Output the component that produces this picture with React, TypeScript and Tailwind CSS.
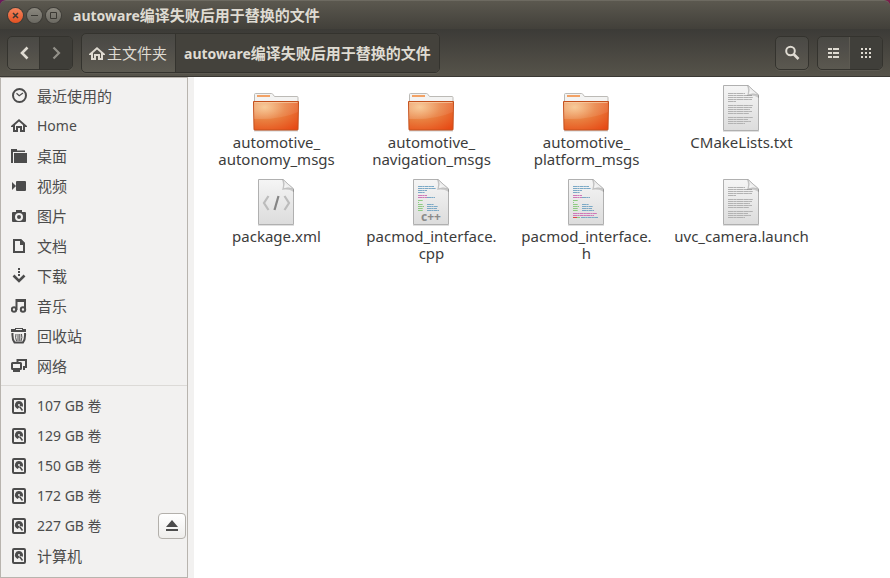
import type { ReactNode } from "react";

const FONT = "font-['Noto_Sans','Noto_Sans_CJK_SC',sans-serif]";

function Glyph({ children }: { children: ReactNode }) {
  return (
    <svg viewBox="0 0 16 16" className="size-4 shrink-0" fill="currentColor" aria-hidden="true">
      {children}
    </svg>
  );
}

const stroke = { fill: "none", stroke: "currentColor", strokeWidth: 2 } as const;

const icons = {
  recent: (
    <Glyph>
      <circle cx="8.500" cy="7.500" r="6.500" {...stroke} />
      <path d="M5.500 5.200 8.200 7.800 12 5" {...stroke} strokeWidth={1.2} />
    </Glyph>
  ),
  home: (
    <Glyph>
      <path d="M8 1 0 8v1h2v5h5v-4h2v4h5V9h2V8zM8 3.6l4 3.5V12h-1V8H5v4H4V7.1z" />
    </Glyph>
  ),
  folder: (
    <Glyph>
      <path d="M0 1h6v1.500h8V4H2v11H0zM3 5h13v9.500q0 .5-.5.5H3z" />
    </Glyph>
  ),
  video: (
    <Glyph>
      <path d="M1 4l4 4-4 4z" />
      <rect x="5" y="3" width="10" height="10" rx="1" />
    </Glyph>
  ),
  camera: (
    <Glyph>
      <path
        fillRule="evenodd"
        d="M5 2h6v2h3q1 0 1 1v8q0 1-1 1H2q-1 0-1-1V5q0-1 1-1h3zM8 5a4 4 0 1 0 0 8 4 4 0 0 0 0-8zm0 2a2 2 0 1 1 0 4 2 2 0 0 1 0-4z"
      />
    </Glyph>
  ),
  document: (
    <Glyph>
      <path d="M3 2h6.500L13 5.500V14H3z" {...stroke} />
      <path d="M9 1h1l4 4v2H9z" />
    </Glyph>
  ),
  download: (
    <Glyph>
      <path d="M7 0h2v2H7zM7 3h2v2H7zM7 6h2v2H7z" />
      <path d="M2.500 7.500 8 13l5.500-5.500" {...stroke} strokeWidth={2.6} />
    </Glyph>
  ),
  music: (
    <Glyph>
      <circle cx="3" cy="11.500" r="2.200" {...stroke} />
      <circle cx="12" cy="11.500" r="2.200" {...stroke} />
      <path d="M5.500 12V2H14v9.500" {...stroke} />
      <path d="M5 1h10v3H5z" />
    </Glyph>
  ),
  trash: (
    <Glyph>
      <path fillRule="evenodd" d="M4 0h8v1h3v3H0V1h4zM5 1h6v1H5z" />
      <path d="M1.500 5q-.5 6 2 9.500h8.500Q14.500 11 14 5" {...stroke} />
      <path d="M5 6q-1 3.500.5 7M10.500 6q1 3.500-.5 7M7 6v7M8.800 6v7" {...stroke} strokeWidth={1} />
    </Glyph>
  ),
  network: (
    <Glyph>
      <path d="M6.500 4V2H15v7h-3" {...stroke} />
      <rect x="1" y="5" width="9" height="6" rx="0.5" {...stroke} />
      <path d="M3 11h5v1h1v2H2v-2h1zM12 9h2v3h-2z" />
    </Glyph>
  ),
  disk: (
    <Glyph>
      <rect x="2" y="1" width="12" height="14" rx="1" {...stroke} />
      <path d="M8 3a4 4 0 0 0-3 6.800L6.500 11 8 9.500V8h2l1.500 1A4 4 0 0 0 8 3zm0 3a1 1 0 1 1 0 2 1 1 0 0 1 0-2z" />
      <path d="M8.500 8.500 11.500 12.500" {...stroke} strokeWidth={1.6} />
    </Glyph>
  ),
};

type Place = { label: string; icon: ReactNode; latin?: boolean; ejectable?: boolean };

const places: Place[] = [
  { label: "最近使用的", icon: icons.recent },
  { label: "Home", icon: icons.home, latin: true },
  { label: "桌面", icon: icons.folder },
  { label: "视频", icon: icons.video },
  { label: "图片", icon: icons.camera },
  { label: "文档", icon: icons.document },
  { label: "下载", icon: icons.download },
  { label: "音乐", icon: icons.music },
  { label: "回收站", icon: icons.trash },
  { label: "网络", icon: icons.network },
];

const devices: Place[] = [
  { label: "107 GB 卷", icon: icons.disk, latin: true },
  { label: "129 GB 卷", icon: icons.disk, latin: true },
  { label: "150 GB 卷", icon: icons.disk, latin: true },
  { label: "172 GB 卷", icon: icons.disk, latin: true },
  { label: "227 GB 卷", icon: icons.disk, latin: true, ejectable: true },
  { label: "计算机", icon: icons.disk },
];

function PlaceList({ items }: { items: Place[] }) {
  return (
    <ul>
      {items.map((item) => (
        <li key={item.label} className="flex h-[30px] items-center pr-px">
          <a href="#" className="flex flex-1 items-center gap-[10px] pl-[10px]">
            {item.icon}
            <span className={item.latin ? "text-[14px] leading-6" : "leading-6"}>{item.label}</span>
          </a>
          {item.ejectable && (
            <button
              type="button"
              aria-label="弹出"
              className="flex h-[26px] w-7 items-center justify-center rounded-[4px] border border-[#b3b0ab] bg-linear-to-b from-white to-[#eeedeb]"
            >
              <Glyph>
                <path d="M8 2l6 7H2zM2 11h12v2H2z" />
              </Glyph>
            </button>
          )}
        </li>
      ))}
    </ul>
  );
}

function FolderIcon() {
  return (
    <svg viewBox="1 0 48 48" className="size-12" aria-hidden="true">
      <defs>
        <radialGradient id="folder-face" cx="0.25" cy="0.2" r="1">
          <stop offset="0" stopColor="#f6c084" />
          <stop offset="0.45" stopColor="#e98040" />
          <stop offset="1" stopColor="#e74a15" />
        </radialGradient>
        <linearGradient id="folder-gloss" x1="0" y1="0" x2="1" y2="1">
          <stop offset="0" stopColor="#fff" stopOpacity="0.22" />
          <stop offset="1" stopColor="#fff" stopOpacity="0.04" />
        </linearGradient>
      </defs>
      <path d="M2 46.500h44" stroke="#000" strokeOpacity="0.18" strokeWidth="2" />
      <path d="M2.500 18v-7.500q0-1 1-1h16q1 0 1.500 1l1.500 2h22.500q1 0 1 1V18z" fill="#f3f3f2" stroke="#bcbab6" />
      <rect x="5" y="11" width="13" height="2" fill="#f3a265" />
      <path d="M1.500 17.500h45l-.5 28q0 .5-1 .5H3q-1 0-1-.5z" fill="url(#folder-face)" stroke="#c4501c" />
      <path d="M2 18h44v10q-18 8-44 7z" fill="url(#folder-gloss)" />
      <path d="M2.500 18.500h43" stroke="#fad0a8" strokeOpacity="0.7" />
    </svg>
  );
}

function Page({ children }: { children: ReactNode }) {
  return (
    <svg viewBox="1 0 48 48" className="size-12" aria-hidden="true">
      <defs>
        <linearGradient id="page-face" x1="0" y1="0" x2="0" y2="1">
          <stop offset="0" stopColor="#f5f5f5" />
          <stop offset="1" stopColor="#dcdcdc" />
        </linearGradient>
        <linearGradient id="page-fold" x1="0" y1="1" x2="0.7" y2="0.3">
          <stop offset="0" stopColor="#fff" />
          <stop offset="1" stopColor="#e3e3e3" />
        </linearGradient>
      </defs>
      <path d="M6 47.500h36" stroke="#000" strokeOpacity="0.12" />
      <path d="M6.500 1.500H31L41.500 11v35.500h-35z" fill="url(#page-face)" stroke="#b0b0b0" />
      {children}
      <path d="M30 2q2 4 0 10 6-1.500 12 2V11L31 1.500z" fill="#000" fillOpacity="0.16" />
      <path d="M31 1.500q2 4 .5 9 5-1.500 10 .5z" fill="url(#page-fold)" stroke="#b8b8b8" strokeWidth="0.7" />
    </svg>
  );
}

const textRows: [number, number][] = [
  [9, 17], [11, 24], [13, 25], [15, 24], [17, 8],
  [21, 25], [23, 24], [25, 22], [27, 24], [29, 21],
  [33, 25], [35, 20], [37, 23], [39, 17],
];

function TextIcon() {
  return (
    <Page>
      {textRows.map(([y, width]) => (
        <path key={y} d={`M11 ${y + 0.5}h${width}`} stroke="#b2b2b2" strokeDasharray="5 0.3 3 0.2 7 0.3" />
      ))}
    </Page>
  );
}

function XmlIcon() {
  return (
    <Page>
      <path d="M16.500 18 12 25l4.500 7M32.500 18 37 25l-4.500 7" fill="none" stroke="#bcbcbc" strokeWidth="2.200" />
      <path d="M26.500 18 22.500 32" fill="none" stroke="#858585" strokeWidth="2.200" />
    </Page>
  );
}

const BLUE = "#7ba9c6";
const PINK = "#cf77b8";
const GREEN = "#8dcb82";

const codeRows: [number, number, number, string][] = [
  [11, 8, 16, BLUE], [11, 10, 18, BLUE], [11, 12, 9, BLUE], [11, 14, 7, BLUE],
  [11, 17, 9, PINK], [11, 19, 9, PINK], [20, 19, 8, BLUE],
  [11, 22, 5, GREEN], [11, 24, 1, GREEN],
  [11, 26, 5, GREEN], [20, 26, 7, BLUE],
  [11, 28, 6, GREEN], [20, 28, 11, BLUE],
  [11, 30, 5, GREEN], [20, 30, 10, BLUE],
  [11, 32, 5, GREEN], [20, 32, 12, BLUE],
];

const headerRows: [number, number, number, string][] = [
  [11, 35, 24, PINK], [11, 37, 21, PINK], [11, 39, 4, "#e0454a"], [15, 39, 3, GREEN], [19, 39, 17, BLUE],
];

function CodeIcon({ plus }: { plus?: boolean }) {
  const rows = plus ? codeRows : [...codeRows, ...headerRows];
  return (
    <Page>
      {rows.map(([x, y, width, color]) => (
        <path key={`${x}-${y}`} d={`M${x} ${y + 0.5}h${width}`} stroke={color} strokeDasharray="4 0.3 2 0.3" />
      ))}
      {plus && (
        <text x="24" y="43" textAnchor="middle" fontSize="12" fontWeight="700" fill="#8a8a8a">
          c++
        </text>
      )}
    </Page>
  );
}

const files = [
  { name: "automotive_\nautonomy_msgs", icon: <FolderIcon /> },
  { name: "automotive_\nnavigation_msgs", icon: <FolderIcon /> },
  { name: "automotive_\nplatform_msgs", icon: <FolderIcon /> },
  { name: "CMakeLists.txt", icon: <TextIcon /> },
  { name: "package.xml", icon: <XmlIcon /> },
  { name: "pacmod_interface.\ncpp", icon: <CodeIcon plus /> },
  { name: "pacmod_interface.\nh", icon: <CodeIcon /> },
  { name: "uvc_camera.launch", icon: <TextIcon /> },
];

function WindowButton({ label, close, children }: { label: string; close?: boolean; children: ReactNode }) {
  return (
    <button
      type="button"
      aria-label={label}
      className={`flex size-[15px] items-center justify-center rounded-full text-[#3a3833] shadow-[0_0_0_1px_#3f3d38] ${
        close ? "bg-linear-to-b from-[#f4845c] to-[#e3501f]" : "bg-linear-to-b from-[#8b887f] to-[#6b6962]"
      }`}
    >
      <svg viewBox="0 0 15 15" className="size-[15px]" fill="none" stroke="currentColor" aria-hidden="true">
        {children}
      </svg>
    </button>
  );
}

function FolderName() {
  return (
    <>
      <span className="text-[14px]">autoware</span>编译失败后用于替换的文件
    </>
  );
}

const group = "flex overflow-hidden rounded-[5px] border border-[#34332e] bg-white/5 shadow-[0_1px_0_#5d5a52]";
const toolButton = "flex w-8 items-center justify-center";

export default function App() {
  return (
    <div className={`flex min-h-screen flex-col bg-white text-[15px] text-[#3c3c3c] ${FONT}`}>
      <header className="bg-linear-to-r from-[#6b1a5a] to-[#7a1f4b] text-[#dfdbd2]">
        <div className="flex h-[29px] items-center rounded-t-[6px] border-t border-[#6d6a61] bg-linear-to-b from-[#5b584f] to-[#42403a] pl-2">
          <div className="flex gap-1">
            <WindowButton label="关闭" close>
              <path d="M5 5l5 5m0-5l-5 5" strokeWidth="1.500" />
            </WindowButton>
            <WindowButton label="最小化">
              <path d="M4 7.500h7" />
            </WindowButton>
            <WindowButton label="最大化">
              <path d="M4.500 4.500h6v6h-6z" />
            </WindowButton>
          </div>
          <h1 className="pl-3 font-bold leading-6">
            <FolderName />
          </h1>
        </div>
        <div className="flex h-12 items-center border-b border-[#3a3833] bg-linear-to-b from-[#3c3b37] to-[#56534a] px-[7px]">
          <div className={`${group} h-[34px]`}>
            <button type="button" aria-label="后退" className={`${toolButton} border-r border-[#34332e]`}>
              <Glyph>
                <path d="M11.500 2.500 6 8l5.500 5.500" {...stroke} strokeWidth={2.600} />
              </Glyph>
            </button>
            <button type="button" aria-label="前进" disabled className={`${toolButton} bg-[#3e3d38] text-[#929088]`}>
              <Glyph>
                <path d="M5.500 2.500 11 8l-5.500 5.500" {...stroke} strokeWidth={2.200} />
              </Glyph>
            </button>
          </div>
          <nav aria-label="路径" className={`${group} ml-2 h-10`}>
            <button type="button" className="flex items-center gap-[2px] border-r border-[#34332e] pt-[2px] pr-2 pl-[7px]">
              {icons.home}
              主文件夹
            </button>
            <button type="button" aria-current="page" className="bg-[#44423c] px-2 pt-[2px] font-bold">
              <FolderName />
            </button>
          </nav>
          <div className="ml-auto flex gap-2">
            <button type="button" aria-label="搜索" className={`${group} h-[34px] w-[34px] items-center justify-center`}>
              <Glyph>
                <circle cx="6.500" cy="6" r="4.300" {...stroke} />
                <path d="M9.500 9 14.500 14" {...stroke} strokeWidth={2.600} />
              </Glyph>
            </button>
            <div className={`${group} h-[34px]`}>
              <button type="button" aria-label="列表视图" className={`${toolButton} border-r border-[#5d5a52]`}>
                <Glyph>
                  <path d="M2 3h4v2H2zM7 3h6v2H7zM2 7h4v2H2zM7 7h6v2H7zM2 11h4v2H2zM7 11h6v2H7z" />
                </Glyph>
              </button>
              <button type="button" aria-label="图标视图" aria-pressed="true" className={`${toolButton} bg-[#403f3a]`}>
                <Glyph>
                  <path d="M3 3h2v2H3zM7 3h2v2H7zM11 3h2v2h-2zM3 7h2v2H3zM7 7h2v2H7zM11 7h2v2h-2zM3 11h2v2H3zM7 11h2v2H7zM11 11h2v2h-2z" />
                </Glyph>
              </button>
            </div>
          </div>
        </div>
      </header>
      <div className="flex flex-1">
        <aside className="flex w-[194px] shrink-0 bg-[#f2f1f0] pr-[6px] text-[#4c4c4c]">
          <nav aria-label="位置" className="flex-1 border border-[#b8b4ae] pt-[3px] pb-1">
            <PlaceList items={places} />
            <hr className="mt-1 mb-[5px] border-[#dcdad7]" />
            <PlaceList items={devices} />
          </nav>
        </aside>
        <main className="flex-1 pt-[7px] pl-[5px]">
          <ul className="grid grid-cols-[repeat(auto-fill,155px)]">
            {files.map((file) => (
              <li key={file.name} className="flex h-[94px] flex-col items-center">
                {file.icon}
                <span className="mt-[2px] text-center leading-[17px] whitespace-pre-line">{file.name}</span>
              </li>
            ))}
          </ul>
        </main>
      </div>
    </div>
  );
}
